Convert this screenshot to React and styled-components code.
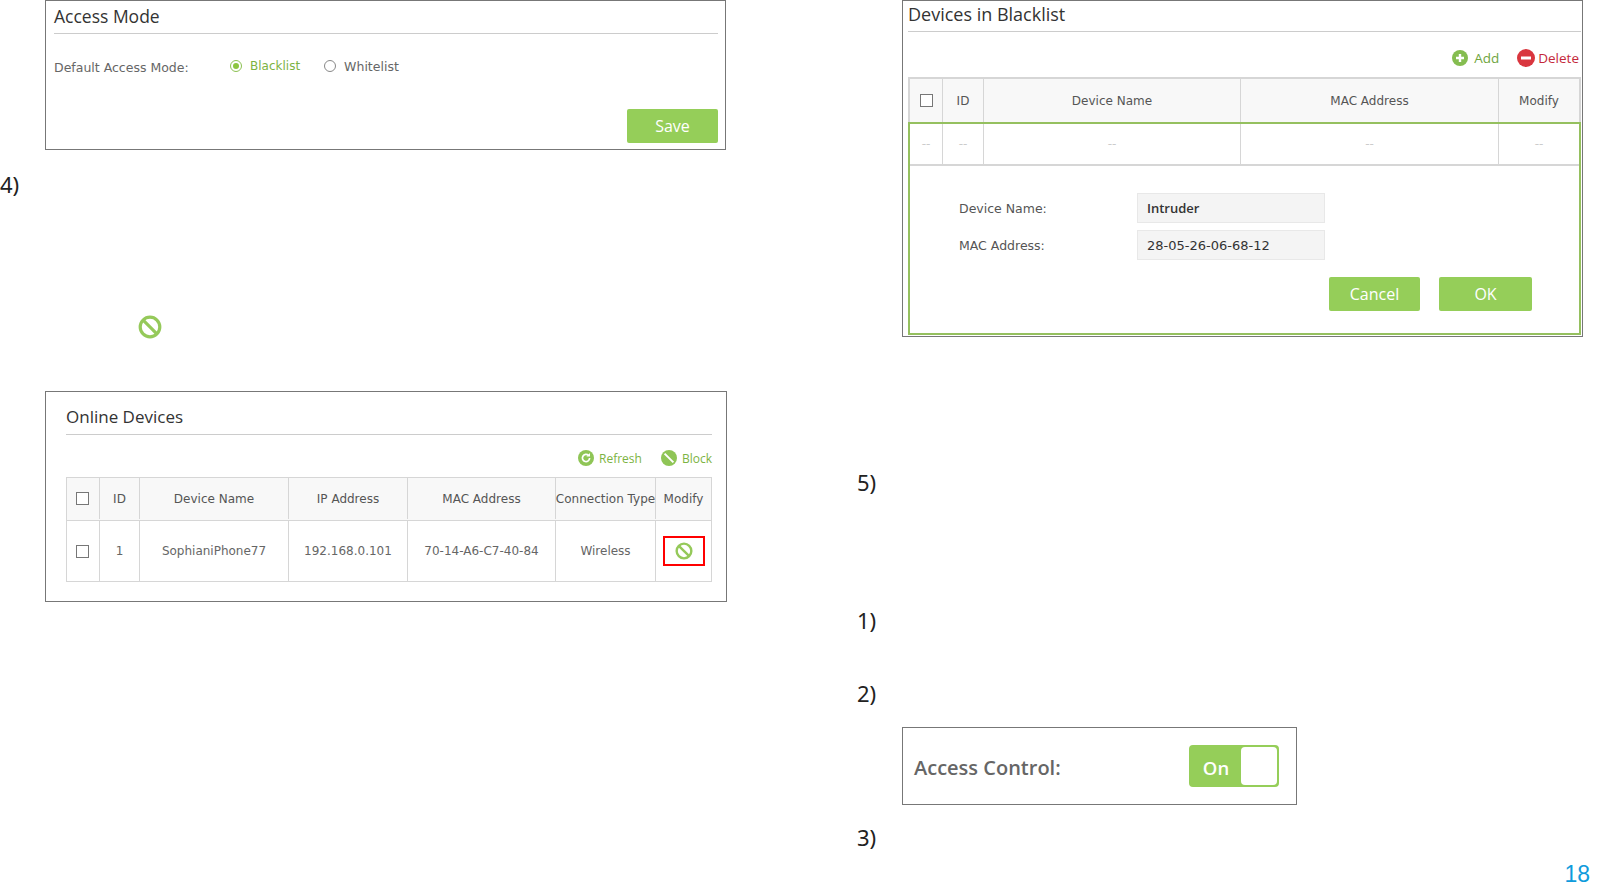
import React from "react";
import styled, { createGlobalStyle } from "styled-components";

const Global = createGlobalStyle`
  html, body { margin: 0; padding: 0; background: #fff; }
  body { font-family: "Open Sans", "Liberation Sans", sans-serif; color: #333; }
  * { box-sizing: border-box; }
`;

const Page = styled.div`
  display: flex;
  width: 1601px;
  height: 888px;
  overflow: hidden;
`;
const LeftColumn = styled.div`
  width: 857px;
  flex: none;
  padding-left: 45px;
`;
const RightColumn = styled.div`
  width: 744px;
  flex: none;
  padding-left: 45px;
`;
const Panel = styled.section`
  border: 1px solid #777;
  background: #fff;
  width: ${(p) => p.$w}px;
  height: ${(p) => p.$h}px;
  margin-top: ${(p) => p.$mt || 0}px;
  padding: ${(p) => p.$pad};
`;
const Step = styled.div`
  font-family: "Noto Sans", sans-serif;
  font-size: 22px;
  line-height: 24px;
  height: 24px;
  color: #222;
  margin-top: ${(p) => p.$mt}px;
  margin-left: ${(p) => p.$ml}px;
`;
const Title = styled.h2`
  margin: 0;
  font-weight: 400;
  font-size: ${(p) => p.$size || 17}px;
  line-height: ${(p) => p.$lh}px;
  padding-top: ${(p) => p.$pt || 0}px;
  padding-bottom: ${(p) => p.$pb || 0}px;
  color: #333;
  border-bottom: 1px solid #ccc;
`;
const ModeRow = styled.div`
  display: flex;
  align-items: center;
  height: 20px;
  margin-top: 22px;
  font-family: "DejaVu Sans", sans-serif;
  font-size: 12.5px;
  color: #666;
`;
const ModeLabel = styled.span`
  width: 176px;
  margin-top: 2px;
`;
const RadioOption = styled.span`
  display: flex;
  align-items: center;
  gap: 8px;
  margin-right: 24px;
  font-size: ${(p) => (p.$on ? 12 : 12.5)}px;
  color: ${(p) => (p.$on ? "#7cb342" : "#666")};
`;
const Radio = styled.span`
  width: 12px;
  height: 12px;
  border-radius: 50%;
  border: 1px solid ${(p) => (p.$on ? "#8cc152" : "#888")};
  display: flex;
  align-items: center;
  justify-content: center;
  &::after {
    content: "";
    width: 6px;
    height: 6px;
    border-radius: 50%;
    background: ${(p) => (p.$on ? "#8cc63f" : "transparent")};
  }
`;
const Actions = styled.div`
  display: flex;
  justify-content: flex-end;
  gap: ${(p) => p.$gap || 0}px;
  margin-top: ${(p) => p.$mt}px;
  padding-right: ${(p) => p.$pr || 0}px;
`;
const Button = styled.button`
  border: 0;
  border-radius: 2px;
  background: #95ce59;
  color: #fff;
  font-family: inherit;
  font-size: 16px;
  line-height: 30px;
  width: ${(p) => p.$w}px;
  height: ${(p) => p.$h}px;
  padding: 0;
`;
const BigIcon = styled.div`
  margin: 119px 0 52px 93px;
  width: 24px;
  height: 24px;
  filter: blur(0.4px);
`;
const Toolbar = styled.div`
  display: flex;
  justify-content: flex-end;
  align-items: center;
  gap: ${(p) => p.$gap}px;
  height: ${(p) => p.$h}px;
  margin-top: ${(p) => p.$mt}px;
  padding-right: ${(p) => p.$pr || 0}px;
  font-size: ${(p) => p.$size}px;
`;
const Tool = styled.span`
  display: flex;
  align-items: center;
  gap: ${(p) => p.$gap}px;
  color: ${(p) => p.$color};
`;
const Row = styled.div`
  display: grid;
  grid-template-columns: ${(p) => p.$cols};
  height: ${(p) => p.$h}px;
  margin-top: ${(p) => p.$mt || 0}px;
  padding-bottom: ${(p) => p.$lift || 0}px;
  background: ${(p) => (p.$head ? "#f8f8f8" : "#fff")};
  font-family: "DejaVu Sans", sans-serif;
  font-size: ${(p) => p.$size || 12}px;
  color: ${(p) => p.$color || "#555"};
  border-top: ${(p) => p.$bt || 0}px solid #d6d6d6;
  border-bottom: ${(p) => p.$bb || 0}px solid #d6d6d6;
  border-left: ${(p) => p.$side || 0}px solid #d6d6d6;
  border-right: ${(p) => p.$side || 0}px solid #d6d6d6;
`;
const Cell = styled.div`
  display: flex;
  align-items: center;
  justify-content: center;
  white-space: nowrap;
  border-right: 1px solid #d6d6d6;
  &:last-child { border-right: 0; }
`;
const Check = styled.span`
  width: 13px;
  height: 13px;
  border: 1px solid #777;
  background: #fff;
  margin-right: ${(p) => p.$nudge || 0}px;
`;
const RedBox = styled.span`
  width: 42px;
  height: 30px;
  border: 2px solid #f00;
  display: flex;
  align-items: center;
  justify-content: center;
`;
const EditBox = styled.div`
  border: 2px solid #95c05f;
  height: 213px;
`;
const Form = styled.div`
  display: grid;
  grid-template-columns: 178px 188px;
  grid-auto-rows: 30px;
  row-gap: 7px;
  margin: 27px 0 0 49px;
  font-family: "DejaVu Sans", sans-serif;
  font-size: 12.5px;
  color: #555;
  align-items: center;
`;
const Field = styled.div`
  height: 30px;
  background: #f4f4f4;
  border: 1px solid #e8e8e8;
  padding-left: 9px;
  display: flex;
  align-items: center;
  color: #333;
  font-family: ${(p) => (p.$bold ? '"Open Sans", sans-serif' : "inherit")};
  font-size: 13px;
  font-weight: ${(p) => (p.$bold ? 600 : 400)};
`;
const ToggleRow = styled.div`
  display: flex;
  align-items: center;
  justify-content: space-between;
  height: 100%;
  padding: 0 17px 0 11px;
`;
const ToggleLabel = styled.span`
  font-size: 20px;
  color: #666;
  font-weight: 600;
  margin-top: 2px;
`;
const Toggle = styled.div`
  width: 90px;
  height: 42px;
  border-radius: 4px;
  border: 2px solid #95ce59;
  background: #95ce59;
  display: flex;
  align-items: center;
  color: #fff;
  font-size: 18.5px;
  font-weight: 600;
`;
const ToggleText = styled.span`
  width: 50px;
  text-align: center;
  padding-top: 3px;
`;
const Knob = styled.span`
  flex: 1;
  height: 100%;
  background: #fff;
  border-radius: 4px;
`;
const PageNumber = styled.div`
  font-family: "Liberation Sans", sans-serif;
  font-size: 23px;
  line-height: 24px;
  color: #0f9bdc;
  text-align: right;
  margin-top: 13px;
  padding-right: 11px;
  margin-left: -45px;
  width: 744px;
`;

const BlockOutline = ({ size, color = "#95c95a" }) => (
  <svg width={size} height={size} viewBox="0 0 24 24" fill="none" stroke={color} strokeWidth="3.2">
    <circle cx="12" cy="12" r="9.8" />
    <line x1="5.4" y1="5.4" x2="18.6" y2="18.6" />
  </svg>
);
const BlockFilled = () => (
  <svg width="16" height="16" viewBox="0 0 16 16">
    <circle cx="8" cy="8" r="8" fill="#8fc556" />
    <line x1="3.6" y1="3.6" x2="12.4" y2="12.4" stroke="#fff" strokeWidth="2" />
  </svg>
);
const RefreshIcon = () => (
  <svg width="16" height="16" viewBox="0 0 16 16">
    <circle cx="8" cy="8" r="8" fill="#8fc556" />
    <path d="M11.6 8a3.6 3.6 0 1 1-1.1-2.6" fill="none" stroke="#fff" strokeWidth="1.7" />
    <path d="M12 3v3.6H8.4z" fill="#fff" />
  </svg>
);
const AddIcon = () => (
  <svg width="16" height="16" viewBox="0 0 16 16">
    <circle cx="8" cy="8" r="8" fill="#85bd50" />
    <path d="M8 4v8M4 8h8" stroke="#fff" strokeWidth="2.4" />
  </svg>
);
const DeleteIcon = () => (
  <svg width="18" height="18" viewBox="0 0 18 18">
    <circle cx="9" cy="9" r="9" fill="#d9363e" />
    <path d="M4 9h10" stroke="#fff" strokeWidth="3" />
  </svg>
);

const onlineCols = "33px 40px 149px 119px 148px 100px 1fr";
const blackCols = "33px 41px 257px 258px 1fr";

export default function App() {
  return (
    <Page>
      <Global />
      <LeftColumn>
        <Panel $w={681} $h={150} $pad="0 7px 0 8px">
          <Title $lh={30} $pb={2} $size={17.5}>Access Mode</Title>
          <ModeRow>
            <ModeLabel>Default Access Mode:</ModeLabel>
            <RadioOption $on><Radio $on />Blacklist</RadioOption>
            <RadioOption><Radio />Whitelist</RadioOption>
          </ModeRow>
          <Actions $mt={33}>
            <Button $w={91} $h={34}>Save</Button>
          </Actions>
        </Panel>
        <Step $mt={22} $ml={-45}>4)</Step>
        <BigIcon><BlockOutline size={24} /></BigIcon>
        <Panel $w={682} $h={211} $pad="0 14px 0 20px">
          <Title $lh={35} $pt={7}>Online Devices</Title>
          <Toolbar $gap={19} $h={20} $mt={13} $size={12}>
            <Tool $gap={5} $color="#7cb342"><RefreshIcon />Refresh</Tool>
            <Tool $gap={5} $color="#7cb342"><BlockFilled />Block</Tool>
          </Toolbar>
          <Row $cols={onlineCols} $h={44} $head $bt={1} $bb={1} $side={1} $mt={9} $lift={1}>
            <Cell><Check $nudge={2} /></Cell>
            <Cell>ID</Cell>
            <Cell>Device Name</Cell>
            <Cell>IP Address</Cell>
            <Cell>MAC Address</Cell>
            <Cell>Connection Type</Cell>
            <Cell>Modify</Cell>
          </Row>
          <Row $cols={onlineCols} $h={61} $bb={1} $side={1} $color="#666">
            <Cell><Check $nudge={2} /></Cell>
            <Cell>1</Cell>
            <Cell>SophianiPhone77</Cell>
            <Cell>192.168.0.101</Cell>
            <Cell>70-14-A6-C7-40-84</Cell>
            <Cell>Wireless</Cell>
            <Cell><RedBox><BlockOutline size={18} /></RedBox></Cell>
          </Row>
        </Panel>
      </LeftColumn>
      <RightColumn>
        <Panel $w={681} $h={337} $pad="0 1px 0 5px">
          <Title $lh={27} $pb={3} $size={18}>Devices in Blacklist</Title>
          <Toolbar $gap={18} $h={20} $mt={16} $pr={2} $size={13.5}>
            <Tool $gap={6} $color="#6fa53d"><AddIcon />Add</Tool>
            <Tool $gap={3} $color="#c4283a"><DeleteIcon />Delete</Tool>
          </Toolbar>
          <Row $cols={blackCols} $h={45} $head $bt={2} $side={2} $mt={9} $size={12}>
            <Cell><Check /></Cell>
            <Cell>ID</Cell>
            <Cell>Device Name</Cell>
            <Cell>MAC Address</Cell>
            <Cell>Modify</Cell>
          </Row>
          <EditBox>
            <Row $cols={blackCols} $h={42} $bb={2} $color="#ccc">
              <Cell>--</Cell>
              <Cell>--</Cell>
              <Cell>--</Cell>
              <Cell>--</Cell>
              <Cell>--</Cell>
            </Row>
            <Form>
              <span>Device Name:</span>
              <Field $bold>Intruder</Field>
              <span>MAC Address:</span>
              <Field>28-05-26-06-68-12</Field>
            </Form>
            <Actions $gap={19} $mt={17} $pr={47}>
              <Button $w={91} $h={34}>Cancel</Button>
              <Button $w={93} $h={34}>OK</Button>
            </Actions>
          </EditBox>
        </Panel>
        <Step $mt={133} $ml={-45}>5)</Step>
        <Step $mt={114} $ml={-45}>1)</Step>
        <Step $mt={49} $ml={-45}>2)</Step>
        <Panel $w={395} $h={78} $mt={22}>
          <ToggleRow>
            <ToggleLabel>Access Control:</ToggleLabel>
            <Toggle><ToggleText>On</ToggleText><Knob /></Toggle>
          </ToggleRow>
        </Panel>
        <Step $mt={20} $ml={-45}>3)</Step>
        <PageNumber>18</PageNumber>
      </RightColumn>
    </Page>
  );
}
